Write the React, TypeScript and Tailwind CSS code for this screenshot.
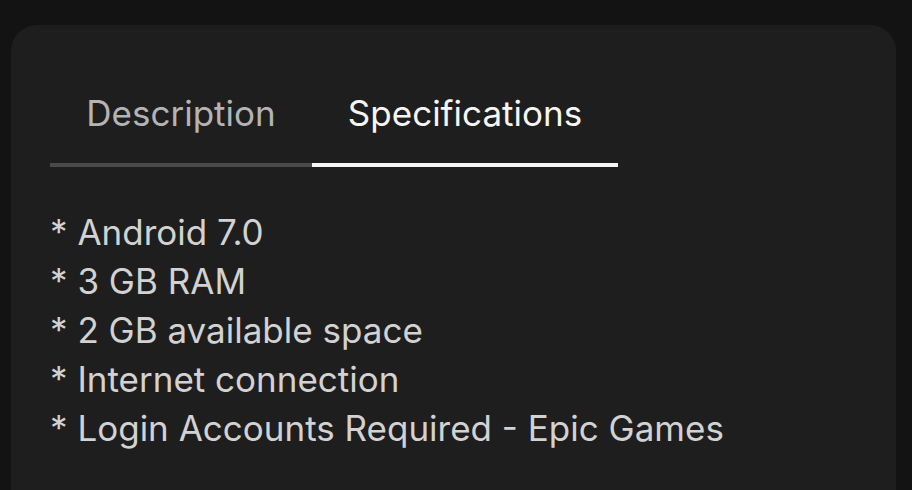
const SPECS = [
  'Android 7.0',
  '3 GB RAM',
  '2 GB available space',
  'Internet connection',
  'Login Accounts Required - Epic Games',
]

export default function App() {
  return (
    <div className="h-[490px] w-[912px] overflow-hidden bg-[#131313] pl-[11px] pr-[16px] pt-[25px] font-['Inter',sans-serif]">
      <div className="h-[500px] rounded-[26px] bg-[#1e1e1e] pl-[39px] pt-[68px]">
        <div className="flex">
          <button className="w-[262px] border-b-4 border-[#4a4a4a] pb-[30px] text-center text-[35px] leading-[40px] text-[#b4b4b4]">
            Description
          </button>
          <button className="w-[306px] border-b-4 border-[#f5f5f5] pb-[30px] text-center text-[35px] leading-[40px] text-[#f5f5f5]">
            Specifications
          </button>
        </div>
        <ul className="mt-[41px] text-[35px] leading-[49px] text-[#d2d2d2]">
          {SPECS.map((s) => (
            <li key={s}>* {s}</li>
          ))}
        </ul>
      </div>
    </div>
  )
}
